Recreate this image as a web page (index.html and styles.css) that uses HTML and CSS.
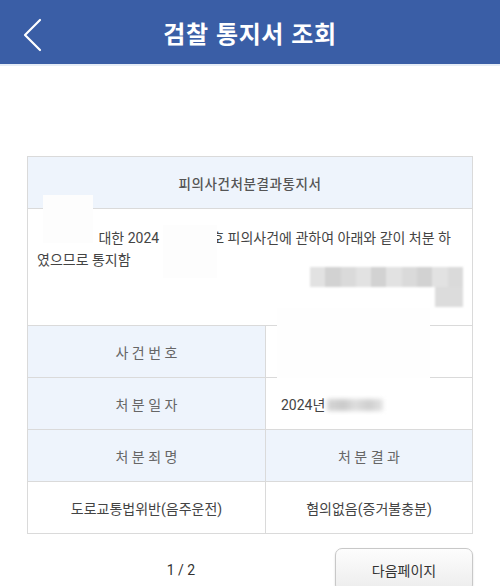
FILE: index.html
```html
<!DOCTYPE html>
<html lang="ko">
<head>
  <meta charset="UTF-8">
  <meta name="viewport" content="width=device-width, initial-scale=1.0">
  <title>검찰 통지서 조회</title>
  <link rel="stylesheet" href="styles.css">
</head>
<body>

  <!-- Top bar -->
  <header class="topbar">
    <a href="#" class="back-btn" aria-label="뒤로">
      <svg width="20" height="34" viewBox="0 0 20 34">
        <polyline points="17,2 2,17 17,32" fill="none" stroke="#fff" stroke-width="2.2" stroke-linecap="round" stroke-linejoin="round"/>
      </svg>
    </a>
    <h1>검찰 통지서 조회</h1>
  </header>

  <main class="content">
    <div class="notice">
      <table class="notice-table">
        <colgroup>
          <col class="col-label">
          <col class="col-value">
        </colgroup>
        <tr>
          <th colspan="2" class="doc-title">피의사건처분결과통지서</th>
        </tr>
        <tr>
          <td colspan="2" class="summary">
            <span class="hide hide-name"></span> 대한 2024<span class="hide hide-no"></span>호 피의사건에 관하여 아래와 같이 처분 하<br>였으므로 통지함
          </td>
        </tr>
        <tr>
          <th>사 건 번 호</th>
          <td class="value"></td>
        </tr>
        <tr>
          <th>처 분 일 자</th>
          <td class="value">2024년<span class="blur-date"></span></td>
        </tr>
        <tr>
          <th>처 분 죄 명</th>
          <th>처 분 결 과</th>
        </tr>
        <tr>
          <td class="center">도로교통법위반(음주운전)</td>
          <td class="center">혐의없음(증거불충분)</td>
        </tr>
      </table>

      <!-- masked personal info -->
      <div class="mask mask-a"></div>
      <div class="mask mask-b"></div>
      <div class="mask mask-c"></div>
      <div class="pixels">
        <div class="px-row">
          <span class="p1"></span><span class="p2"></span><span class="p3"></span><span class="p1"></span><span class="p2"></span><span class="p1"></span><span class="p3"></span><span class="p2"></span><span class="p1"></span><span class="p3"></span>
        </div>
        <div class="px-tail"></div>
      </div>
    </div>

    <div class="pager">
      <span class="page-no">1 / 2</span>
      <button class="next-btn">다음페이지</button>
    </div>
  </main>

</body>
</html>
```

FILE: styles.css
```css
/* General Styling */
body {
  font-family: Roboto, "Noto Sans CJK KR", sans-serif;
  background-color: #fff;
  color: #444;
  margin: 0;
  padding: 0;
  width: 500px;
  height: 586px;
  overflow: hidden;
}

/* Top bar */
.topbar {
  height: 64px;
  background-color: #3a5ea6;
  border-bottom: 2px solid #e6edf6;
  display: flex;
  align-items: center;
  justify-content: center;
  position: relative;
}

.topbar h1 {
  margin: 0;
  color: #fff;
  font-size: 24px;
  font-weight: bold;
  font-family: "Noto Sans CJK KR", sans-serif;
  letter-spacing: 0.6px;
}

.back-btn {
  position: absolute;
  left: 23px;
  top: 18px;
  display: block;
}

/* Content */
.content {
  padding: 90px 27px 0;
}

.notice {
  position: relative;
}

.notice-table {
  width: 446px;
  border-collapse: collapse;
  table-layout: fixed;
  font-size: 14px;
}

.col-label {
  width: 238px;
}

.notice-table th,
.notice-table td {
  border: 1px solid #dadada;
  height: 51px;
  padding: 0;
}

.notice-table th {
  background-color: #eef4fc;
  color: #666;
  font-weight: normal;
}

.notice-table .doc-title {
  color: #555;
  font-size: 13.5px;
  font-weight: 500;
  letter-spacing: 0.6px;
}

.notice-table .summary {
  height: 98px;
  vertical-align: top;
  padding: 18px 9px 0;
  line-height: 22px;
  color: #444;
  font-size: 14px;
}

.hide {
  display: inline-block;
  vertical-align: top;
  height: 22px;
}

.hide-name {
  width: 58px;
}

.hide-no {
  width: 52px;
}

.notice-table .value {
  padding-left: 15px;
  font-size: 14px;
  color: #444;
}

.center {
  text-align: center;
  font-size: 14px;
  color: #444;
}

.blur-date {
  display: inline-block;
  width: 56px;
  height: 12px;
  margin-left: 2px;
  vertical-align: -1px;
  background: linear-gradient(90deg, #d6d6d6, #cacaca 30%, #dedede 50%, #cfcfcf 75%, #e4e4e4);
  filter: blur(2px);
}

/* Masks over personal info */
.mask {
  position: absolute;
  background-color: #fdfdfd;
}

.mask-a {
  left: 16px;
  top: 39px;
  width: 50px;
  height: 48px;
}

.mask-b {
  left: 136px;
  top: 69px;
  width: 54px;
  height: 53px;
}

.mask-c {
  left: 250px;
  top: 152px;
  width: 153px;
  height: 70px;
  background-color: #fefefe;
}

.pixels {
  position: absolute;
  left: 283px;
  top: 111px;
  width: 153px;
  filter: blur(1px);
}

.px-row {
  display: flex;
  height: 20px;
}

.px-row span {
  flex: 1;
}

.p1 { background-color: #e2e2e2; }
.p2 { background-color: #d2d2d2; }
.p3 { background-color: #dadada; }

.px-tail {
  margin-left: 125px;
  width: 28px;
  height: 20px;
  background-color: #dcdcdc;
}

/* Pager */
.pager {
  display: flex;
  align-items: center;
  margin-top: 14px;
}

.page-no {
  flex: 1;
  text-align: center;
  font-size: 14px;
  color: #333;
}

.next-btn {
  width: 138px;
  height: 44px;
  border: 1px solid #c8c8c8;
  border-radius: 7px;
  background: linear-gradient(#fdfdfd, #ececec);
  box-shadow: 0 1px 2px rgba(0, 0, 0, 0.15);
  font-family: "Noto Sans CJK KR", sans-serif;
  font-size: 14px;
  color: #333;
  padding: 0;
}
```
